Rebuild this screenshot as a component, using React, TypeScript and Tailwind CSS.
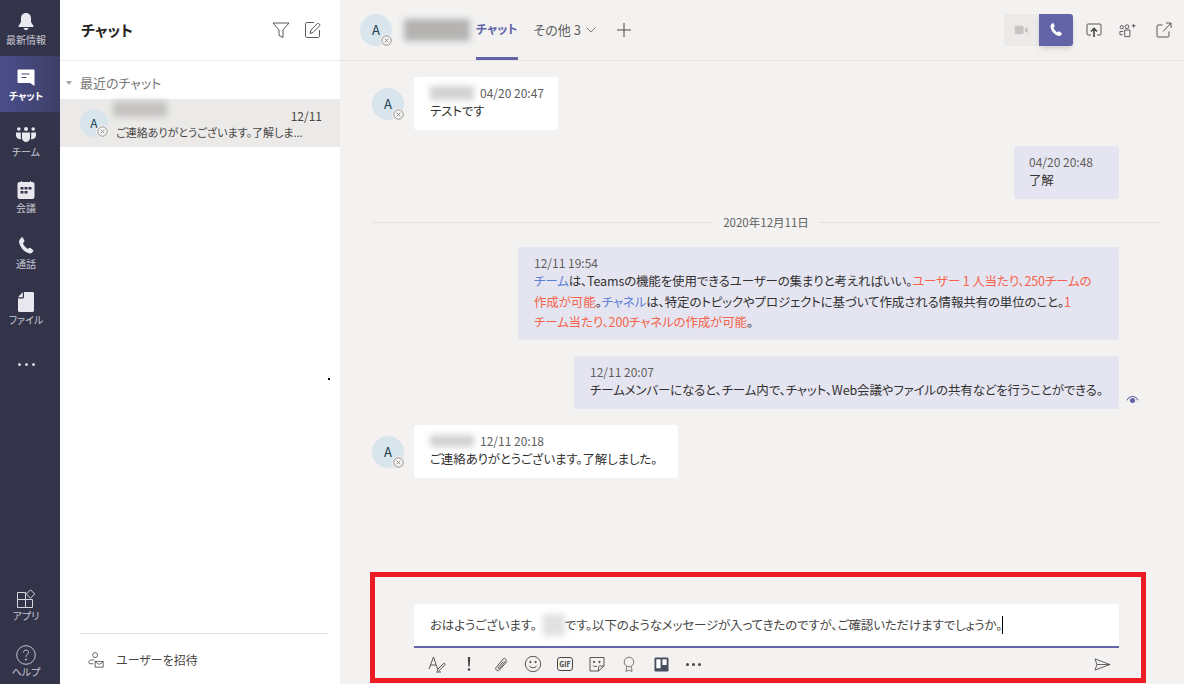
import type { ReactNode } from "react";

const navTop = [
  { label: "最新情報", icon: <BellIcon /> },
  { label: "チャット", icon: <ChatIcon />, active: true },
  { label: "チーム", icon: <TeamIcon /> },
  { label: "会議", icon: <CalendarIcon /> },
  { label: "通話", icon: <PhoneIcon className="w-[20px] h-[20px] text-[#e8e8ee]" /> },
  { label: "ファイル", icon: <FileIcon /> },
];

function BellIcon() {
  return (
    <svg viewBox="0 0 20 20" className="w-[20px] h-[20px] text-[#e8e8ee]" fill="currentColor">
      <path d="M10 1c-3.200 0-5 2.400-5 5.200v3.800L2.500 14c-.2.500 0 .9.600.9h13.800c.6 0 .8-.4.600-.9L15 10V6.200C15 3.400 13.200 1 10 1z" />
      <path d="M7.600 16h4.800c-.2 1.300-1.200 2.200-2.400 2.200S7.800 17.300 7.600 16z" />
    </svg>
  );
}

function ChatIcon() {
  return (
    <svg viewBox="0 0 20 20" className="w-[20px] h-[20px]">
      <path d="M2.500 1.500h15c.6 0 1 .4 1 1v15.500l-4.500-3H2.500c-.6 0-1-.4-1-1v-11.500c0-.6.4-1 1-1z" fill="#fff" />
      <path d="M5.500 6h8M5.500 9.500h5" stroke="#464775" strokeWidth="1.200" />
    </svg>
  );
}

function TeamIcon() {
  return (
    <svg viewBox="0 0 20 15" className="w-[20px] h-[15px] text-[#e8e8ee]" fill="currentColor">
      <circle cx="2.800" cy="2" r="1.800" />
      <circle cx="10" cy="2" r="2" />
      <circle cx="17.200" cy="2" r="1.800" />
      <path d="M0 5.500h4.800v4.500c0 .8.200 1.500.5 2.200C2.500 12.400 0 11 0 8.500z" />
      <path d="M20 5.500h-4.800v4.500c0 .8-.2 1.500-.5 2.200 2.800.2 5.300-1.200 5.300-3.700z" />
      <path d="M6 5.500h8v5.500c0 2.200-1.800 4-4 4s-4-1.800-4-4z" />
    </svg>
  );
}

function CalendarIcon() {
  return (
    <svg viewBox="0 0 18 18" className="w-[18px] h-[18px]">
      <path d="M4.500 0v2M13.500 0v2" stroke="#e8e8ee" strokeWidth="1" />
      <rect x="0.500" y="1" width="17" height="17" rx="2" fill="#e8e8ee" />
      <path d="M3.500 6h3v2.500h-3zM7.500 6h3v2.500h-3zM11.500 6h3v2.500h-3zM3.500 10h3v2.500h-3zM7.500 10h3v2.500h-3z" fill="#33344a" />
    </svg>
  );
}

function PhoneIcon({ className }: { className: string }) {
  return (
    <svg viewBox="0 0 20 20" className={className} fill="currentColor">
      <path d="M5.500 1.500c.5-.3 1.100-.2 1.400.3l1.400 2.700c.3.500.2 1-.2 1.400l-1 1c-.2.200-.2.400-.1.700.8 2 2.300 3.800 4.300 5.100.3.200.5.100.7 0l1.200-.8c.5-.3 1-.3 1.400.1l2.400 2c.4.400.5 1 .1 1.400l-.9 1.100c-.7.800-1.700 1.200-2.800.9C8.400 16.200 4.100 11.500 3.100 6.200c-.2-1.100.1-2.200.9-3z" />
    </svg>
  );
}

function FileIcon() {
  return (
    <svg viewBox="0 0 16 20" className="w-[16px] h-[20px] text-[#e8e8ee]" fill="currentColor">
      <path d="M6 0h8.500c.8 0 1.500.7 1.500 1.500v17c0 .8-.7 1.500-1.500 1.500h-13C.7 20 0 19.300 0 18.500V6.500h4.500C5.300 6.500 6 5.800 6 5z" />
      <path d="M4.800 0v4.500c0 .5-.3.800-.8.800H0z" />
    </svg>
  );
}

function AppsIcon() {
  return (
    <svg viewBox="0 0 20 20" className="w-[20px] h-[20px]" fill="none" stroke="#d6d6de" strokeWidth="1">
      <path d="M1.500 3.500h8v7h7v8h-15z" />
      <path d="M1.500 10.500h8v8M9.500 3.500v7" />
      <path d="M14.500 0.800l4.200 4.200-4.200 4.200-4.200-4.200z" />
    </svg>
  );
}

function HelpIcon() {
  return (
    <svg viewBox="0 0 20 20" className="w-[20px] h-[20px]" fill="none" stroke="#d6d6de" strokeWidth="0.900">
      <circle cx="10" cy="10" r="9.300" />
      <path d="M7.500 7.500c0-1.500 1.100-2.500 2.500-2.500s2.500 1 2.500 2.300c0 2.200-2.500 2.200-2.500 4.500" />
      <circle cx="10" cy="14.500" r=".6" fill="#d6d6de" />
    </svg>
  );
}

function StatusBadge({ className }: { className: string }) {
  return (
    <span className={"absolute flex items-center justify-center rounded-full bg-[#f3f2f1] w-[13px] h-[13px] " + className}>
      <svg viewBox="0 0 10 10" className="w-[11px] h-[11px]" fill="none" stroke="#8a8886" strokeWidth="0.800">
        <circle cx="5" cy="5" r="4.300" />
        <path d="M3.400 3.400l3.200 3.200M6.600 3.400l-3.200 3.200" />
      </svg>
    </span>
  );
}

function Avatar({ small }: { small?: boolean }) {
  return (
    <div className={"relative shrink-0 rounded-full bg-[#d8e5ec] flex items-center justify-center text-[#20404f] " + (small ? "w-[28px] h-[28px] text-[12px]" : "w-[32px] h-[32px] text-[13px]")}>
      A
      <StatusBadge className="right-[-1px] bottom-[-1px]" />
    </div>
  );
}

function Blurred({ className }: { className: string }) {
  return <div className={"bg-[#b4b3b2] blur-[3px] " + className} />;
}

function Bubble({ children, className }: { children: ReactNode; className: string }) {
  return <div className={"relative rounded-[3px] " + className}>{children}</div>;
}

function ToolIcon({ children }: { children: ReactNode }) {
  return <span className="w-[32px] h-[20px] flex items-center justify-center text-[#484644]">{children}</span>;
}

const tools = [
  <svg key="format" viewBox="0 0 18 18" className="w-[18px] h-[18px]" fill="none" stroke="currentColor" strokeWidth="0.900">
    <path d="M1 14L5.500 2 9.500 14M2.600 10h5.600" />
    <path d="M9 15l6.500-6.500c1-.8 2.200.4 1.400 1.400L10.500 16.200z" />
    <path d="M8 17h5" />
  </svg>,
  <svg key="important" viewBox="0 0 18 18" className="w-[18px] h-[18px]" fill="currentColor">
    <path d="M7.800 2h2.400l-.5 9.500H8.300z" />
    <circle cx="9" cy="14.500" r="1.300" />
  </svg>,
  <svg key="attach" viewBox="0 0 18 18" className="w-[18px] h-[18px]" fill="none" stroke="currentColor" strokeWidth="0.900">
    <path d="M15 6.500l-7.500 8.500c-1.500 1.700-5 0-3.400-2.500l7-8.500c1.300-1.500 3.700.3 2.600 2l-6.300 7.500c-.7.800-1.700-.1-1.100-1l5-6" />
  </svg>,
  <svg key="emoji" viewBox="0 0 18 18" className="w-[18px] h-[18px]" fill="none" stroke="currentColor" strokeWidth="0.900">
    <circle cx="9" cy="9" r="7.700" />
    <circle cx="6.400" cy="7" r=".7" fill="currentColor" />
    <circle cx="11.600" cy="7" r=".7" fill="currentColor" />
    <path d="M5.300 10.700c.9 1.500 2.200 2.100 3.700 2.100s2.800-.6 3.700-2.100" />
  </svg>,
  <span key="gif" className="w-[16px] h-[14px] border border-[#484644] rounded-[3px] text-[7px] font-bold flex items-center justify-center leading-none">GIF</span>,
  <svg key="sticker" viewBox="0 0 18 18" className="w-[18px] h-[18px]" fill="none" stroke="currentColor" strokeWidth="0.900">
    <path d="M2 2.500h14v8.500l-5.500 5H2z" />
    <path d="M16 11h-4c-1 0-1.500.5-1.500 1.500V16" />
    <circle cx="6" cy="7" r=".7" fill="currentColor" />
    <circle cx="11.500" cy="7" r=".7" fill="currentColor" />
    <path d="M5 10.500c1 1 2.500 1.200 4 .8" />
  </svg>,
  <svg key="praise" viewBox="0 0 18 18" className="w-[18px] h-[18px]" fill="none" stroke="#6e6c6a" strokeWidth="0.900">
    <circle cx="9" cy="7" r="4.800" />
    <path d="M6.500 11.500L6 16.500l3-1.500 3 1.500-.5-5" />
  </svg>,
  <svg key="trello" viewBox="0 0 16 16" className="w-[15px] h-[15px]">
    <rect width="15" height="15" x=".5" y=".5" rx="1.500" fill="#484f5c" />
    <rect x="2.500" y="2.500" width="4.500" height="9.500" fill="#fff" />
    <rect x="9" y="2.500" width="4.500" height="6" fill="#fff" />
  </svg>,
  <span key="more" className="flex gap-[3px]">
    <i className="w-[3px] h-[3px] rounded-full bg-[#484644]" />
    <i className="w-[3px] h-[3px] rounded-full bg-[#484644]" />
    <i className="w-[3px] h-[3px] rounded-full bg-[#484644]" />
  </span>,
];

const msgText = "mt-[-1px] leading-[20.5px]";

export default function App() {
  return (
    <div className="relative flex h-[684px] w-[1184px] overflow-hidden bg-[#f3f2f1] text-[#323130] font-['Noto_Sans_CJK_JP','Noto_Sans',sans-serif] [font-feature-settings:'palt']">
      <nav className="w-[60px] shrink-0 bg-[#33344a] flex flex-col items-stretch text-[#c8c8d2]">
        {navTop.map((n) => (
          <div
            key={n.label}
            className={"h-[56px] pt-[2px] pr-[8px] flex flex-col items-center justify-center gap-[2px] " + (n.active ? "bg-linear-to-r from-[#4a4e8c] to-[#3e3f66] text-white font-bold" : "")}
          >
            <span className="h-[20px] flex items-center">{n.icon}</span>
            <span className="text-[10px] leading-[12px] whitespace-nowrap">{n.label}</span>
          </div>
        ))}
        <div className="h-[56px] pr-[8px] flex items-center justify-center gap-[4px]">
          <i className="w-[3px] h-[3px] rounded-full bg-[#d6d6de]" />
          <i className="w-[3px] h-[3px] rounded-full bg-[#d6d6de]" />
          <i className="w-[3px] h-[3px] rounded-full bg-[#d6d6de]" />
        </div>
        <div className="mt-auto pr-[8px] flex flex-col items-center gap-[1px] pb-[6px]">
          <AppsIcon />
          <span className="text-[10px] leading-[12px] mb-[22px]">アプリ</span>
          <HelpIcon />
          <span className="text-[10px] leading-[12px]">ヘルプ</span>
        </div>
      </nav>

      <aside className="relative w-[280px] shrink-0 bg-white flex flex-col">
        <header className="h-[61px] shrink-0 border-b border-[#efeeed] flex items-center pl-[21px] pr-[18px]">
          <h1 className="text-[15px] font-bold flex-1 text-[#252423]">チャット</h1>
          <svg viewBox="0 0 18 18" className="w-[18px] h-[18px] mr-[14px]" fill="none" stroke="#484644" strokeWidth="0.900">
            <path d="M1 2h16l-6 7v7.500l-4-2V9z" />
          </svg>
          <svg viewBox="0 0 18 18" className="w-[18px] h-[18px]" fill="none" stroke="#484644" strokeWidth="0.900">
            <path d="M15.500 9v6c0 1-.6 1.500-1.500 1.500H3c-.9 0-1.500-.5-1.500-1.500V3c0-1 .6-1.500 1.500-1.500h7" />
            <path d="M6 12.500l1-3.500 6.500-6.500c.8-.8 3 1.200 2.200 2.200L9 11.500z" />
          </svg>
        </header>
        <div className="h-[38px] pt-[6px] shrink-0 flex items-center pl-[6px] gap-[8px] text-[13px] text-[#7a7876]">
          <i className="w-0 h-0 border-x-[3px] border-x-transparent border-t-[4px] border-t-[#a8a6a4]" />
          最近のチャット
        </div>
        <div className="h-[48px] shrink-0 bg-[#ebeae8] flex pl-[20px] pr-[18px] pt-[10px]">
          <Avatar small />
          <div className="relative ml-[8px] flex-1 min-w-0">
            <Blurred className="absolute left-[-3px] top-[-8px] w-[54px] h-[16px] opacity-70" />
            <div className="text-right text-[12px] leading-[14px] text-[#484644]">12/11</div>
            <div className="text-[11px] leading-[16px] mt-[1px] text-[#484644] whitespace-nowrap">ご連絡ありがとうございます。了解しま...</div>
          </div>
        </div>
        <div className="mt-auto mx-[20px] mr-[12px] border-t border-[#e1dfdd] h-[51px] pt-[2px] flex items-center pl-[8px] gap-[12px] text-[12px] text-[#484644]">
          <svg viewBox="0 0 18 18" className="w-[16px] h-[16px]" fill="none" stroke="#484644" strokeWidth="0.900">
            <circle cx="8" cy="3.500" r="2.800" />
            <path d="M7 9H3.500C2 9 1 10 1 12M1 12c0 .8.500 1.200 1 1.200H6" />
            <rect x="8" y="10.500" width="9" height="6.500" />
            <path d="M8 11l4.500 3 4.500-3" />
          </svg>
          ユーザーを招待
        </div>
        <i className="absolute left-[268px] top-[378px] w-[2px] h-[2px] bg-black" />
      </aside>

      <main className="flex-1 min-w-0 flex flex-col">
        <header className="h-[61px] shrink-0 border-b border-[#e6e4e2] flex items-center pl-[20px] pr-[12px]">
          <Avatar />
          <Blurred className="ml-[12px] w-[66px] h-[22px]" />
          <div className="ml-[6px] h-full flex flex-col items-stretch">
            <span className="flex-1 flex items-center text-[12px] font-bold text-[#6264a7]">チャット</span>
            <i className="h-[3px] bg-[#6264a7]" />
          </div>
          <span className="ml-[16px] text-[13px] text-[#605e5c] flex items-center gap-[5px]">
            その他 3
            <svg viewBox="0 0 10 6" className="w-[10px] h-[6px]" fill="none" stroke="#605e5c" strokeWidth="0.800">
              <path d="M.5.500L5 5l4.500-4.500" />
            </svg>
          </span>
          <svg viewBox="0 0 16 16" className="ml-[20px] w-[16px] h-[16px]" fill="none" stroke="#484644" strokeWidth="1">
            <path d="M8 1v14M1 8h14" />
          </svg>
          <div className="ml-auto flex h-[32px]">
            <div className="w-[35px] bg-[#ebeae9] rounded-l-[3px] flex items-center justify-center">
              <svg viewBox="0 0 16 12" className="w-[15px] h-[10px]" fill="#c8c6c4">
                <rect width="10.500" height="10" y="1" rx="1" />
                <path d="M11.500 5l4-3v8l-4-3z" />
              </svg>
            </div>
            <div className="w-[34px] bg-[#6264a7] rounded-r-[3px] shadow-md flex items-center justify-center">
              <PhoneIcon className="w-[16px] h-[16px] text-white" />
            </div>
          </div>
          <div className="ml-[13px] flex items-center gap-[17px] text-[#484644]">
            <svg viewBox="0 0 16 16" className="w-[16px] h-[16px]" fill="none" stroke="currentColor" strokeWidth="0.900">
              <path d="M5 13H2c-.6 0-1-.4-1-1V3c0-.6.4-1 1-1h12c.6 0 1 .4 1 1v9c0 .6-.4 1-1 1h-3" />
              <path d="M8 15V7M5 9.500L8 6.500l3 3" strokeWidth="1.600" />
            </svg>
            <svg viewBox="0 0 18 16" className="w-[17px] h-[16px]" fill="none" stroke="currentColor" strokeWidth="0.900">
              <circle cx="3" cy="5" r="1.800" />
              <circle cx="8.500" cy="4.500" r="2" />
              <path d="M1 13V9.500h3.500M6 8h5.500v7H6zM1 13h3" />
              <path d="M13.500 3.500h4M15.500 1.500v4" />
            </svg>
            <svg viewBox="0 0 16 16" className="ml-[3px] w-[16px] h-[16px]" fill="none" stroke="currentColor" strokeWidth="0.900">
              <path d="M6.500 3H2c-.6 0-1 .4-1 1v10c0 .6.4 1 1 1h10c.6 0 1-.4 1-1V9.500" />
              <path d="M7 9.500L15 1M10 1h5v5" />
            </svg>
          </div>
        </header>

        <section className="flex-1 min-h-0 flex flex-col pl-[32px] pr-[65px] pt-[16px] text-[12.5px] tracking-[-0.15px] leading-[20px]">
          <div className="flex gap-[10px]">
            <div className="pt-[11px]">
              <Avatar />
            </div>
            <Bubble className="bg-white pl-[16px] pt-[7px] w-[144px] h-[53px] flex flex-col">
              <div className="flex items-center h-[18px]">
                <Blurred className="w-[44px] h-[14px] opacity-60" />
                <span className="ml-[6px] text-[12px] tracking-normal text-[#605e5c] whitespace-nowrap">04/20 20:47</span>
              </div>
              <div className={msgText}>テストです</div>
            </Bubble>
          </div>

          <div className="flex justify-end mt-[16px]">
            <Bubble className="bg-[#e5e5f1] w-[105px] h-[53px] pl-[15px] pt-[7px]">
              <div className="text-[12px] tracking-normal leading-[18px] text-[#605e5c] whitespace-nowrap">04/20 20:48</div>
              <div className={msgText}>了解</div>
            </Bubble>
          </div>

          <div className="flex items-center mt-[13px] mr-[-41px] h-[20px] text-[11.5px] tracking-normal text-[#605e5c]">
            <i className="flex-1 h-px bg-[#e4e2e0]" />
            <span className="px-[10px]">2020年12月11日</span>
            <i className="flex-1 h-px bg-[#e4e2e0]" />
          </div>

          <div className="flex justify-end mt-[15px]">
            <Bubble className="bg-[#e5e5f1] w-[601px] h-[93px] pl-[16px] pt-[7px] whitespace-nowrap">
              <div className="text-[12px] tracking-normal leading-[18px] text-[#605e5c]">12/11 19:54</div>
              <div className={msgText}>
                <span className="text-[#5b7fd6]">チーム</span>は、Teamsの機能を使用できるユーザーの集まりと考えればいい。<span className="text-[#f4634a]">ユーザー 1 人当たり、250チームの</span>
                <br />
                <span className="text-[#f4634a]">作成が可能</span>。<span className="text-[#5b7fd6]">チャネル</span>は、特定のトピックやプロジェクトに基づいて作成される情報共有の単位のこと。<span className="text-[#f4634a]">1</span>
                <br />
                <span className="text-[#f4634a]">チーム当たり、200チャネルの作成が可能</span>。
              </div>
            </Bubble>
          </div>

          <div className="flex justify-end mt-[16px]">
            <Bubble className="bg-[#e5e5f1] w-[545px] h-[53px] pl-[16px] pt-[7px] whitespace-nowrap">
              <div className="text-[12px] tracking-normal leading-[18px] text-[#605e5c]">12/11 20:07</div>
              <div className={msgText}>チームメンバーになると、チーム内で、チャット、Web会議やファイルの共有などを行うことができる。</div>
              <svg viewBox="0 0 14 10" className="absolute right-[-20px] bottom-[5px] w-[13px] h-[9px]" fill="#6264a7">
                <path d="M7 1C4 1 1.500 3 .5 5.500l1 .5C2.500 3.800 4.500 2.300 7 2.300s4.500 1.500 5.500 3.700l1-.5C12.500 3 10 1 7 1z" />
                <circle cx="7" cy="6" r="2.800" />
              </svg>
            </Bubble>
          </div>

          <div className="flex gap-[10px] mt-[16px]">
            <div className="pt-[11px]">
              <Avatar />
            </div>
            <Bubble className="bg-white w-[264px] h-[53px] pl-[16px] pt-[7px]">
              <div className="flex items-center h-[18px]">
                <Blurred className="w-[44px] h-[12px] opacity-60" />
                <span className="ml-[6px] text-[12px] tracking-normal text-[#605e5c] whitespace-nowrap">12/11 20:18</span>
              </div>
              <div className={msgText}>ご連絡ありがとうございます。了解しました。</div>
            </Bubble>
          </div>
        </section>

        <footer className="shrink-0 pl-[74px] pr-[65px]">
          <div className="relative h-[44px] bg-white rounded-t-[3px] border-b-2 border-[#6264a7] pl-[16px] flex items-center text-[12.5px] tracking-[-0.15px] text-[#484644] whitespace-nowrap">
            おはようございます。
            <Blurred className="ml-[6px] w-[22px] h-[22px] opacity-40" />
            です。以下のようなメッセージが入ってきたのですが、ご確認いただけますでしょうか。
            <i className="w-px h-[18px] bg-black" />
          </div>
          <div className="h-[36px] pb-[4px] flex items-center pl-[7px] pr-[8px]">
            {tools.map((t, i) => (
              <ToolIcon key={i}>{t}</ToolIcon>
            ))}
            <svg viewBox="0 0 18 14" className="ml-auto w-[17px] h-[13px]" fill="none" stroke="#484644" strokeWidth="0.900">
              <path d="M1 1l16 6-16 6 2-6zM3 7h14" />
            </svg>
          </div>
        </footer>
      </main>

      <div className="absolute left-[370px] top-[572px] w-[776px] h-[111px] border-[5px] border-[#ed1c24] pointer-events-none" />
    </div>
  );
}
